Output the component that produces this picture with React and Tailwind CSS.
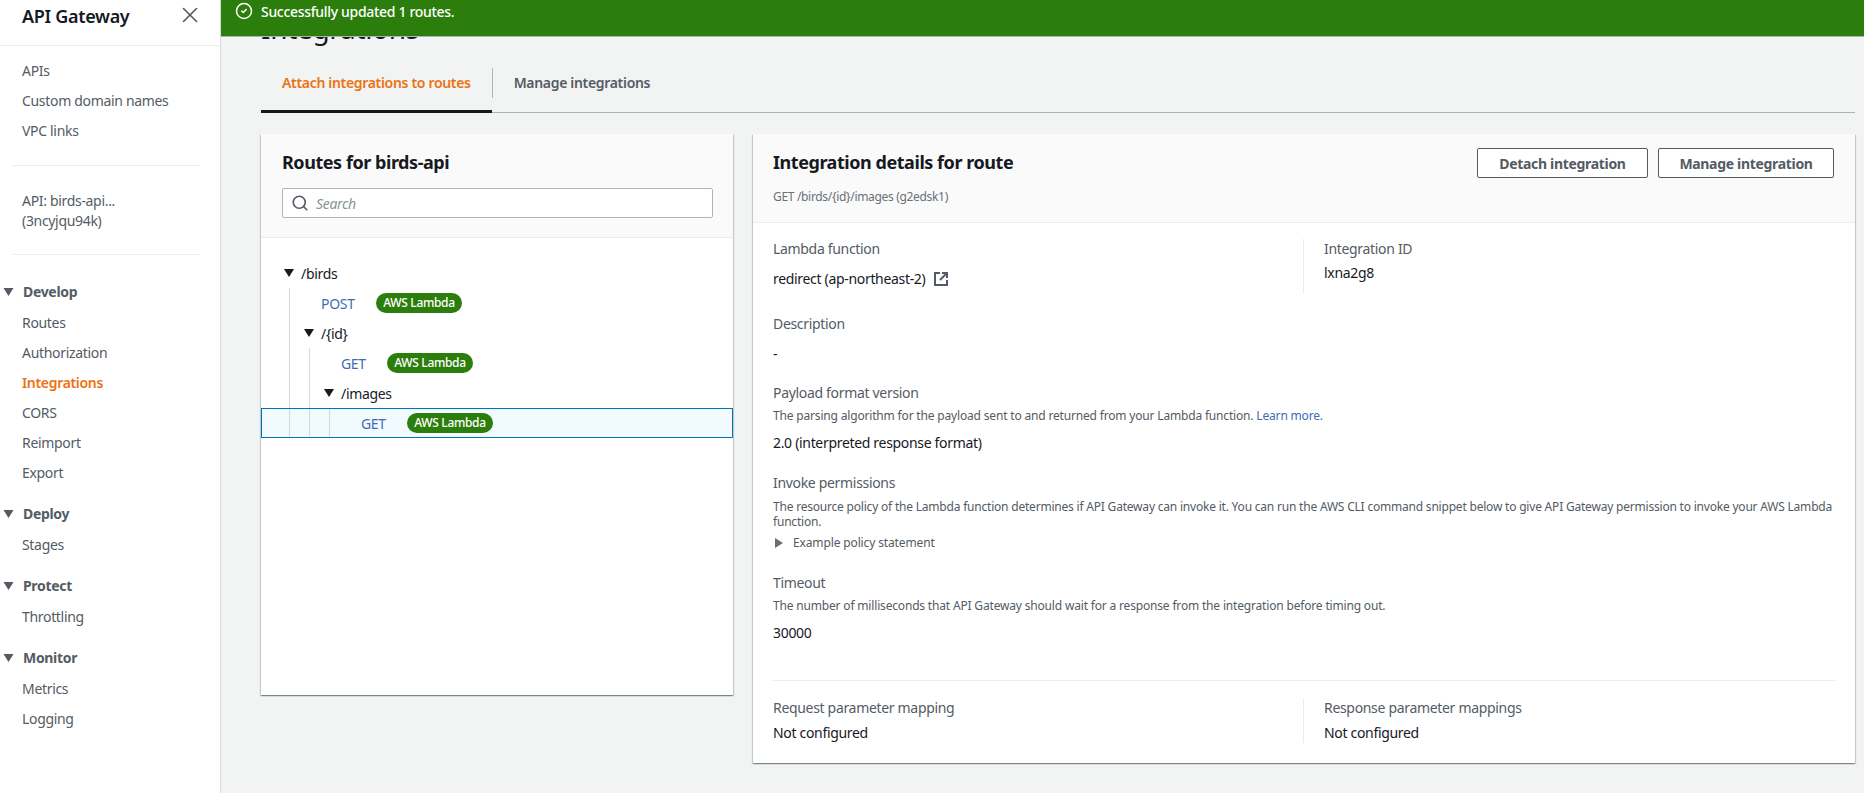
import React from 'react';
import { X, Search, CircleCheck } from 'lucide-react';

const Caret = ({ className }) => (
  <svg viewBox="0 0 10 8" className={className} fill="currentColor">
    <polygon points="0,0 10,0 5,8" />
  </svg>
);

const NewTabIcon = () => (
  <svg viewBox="0 0 16 16" className="h-[16px] w-[16px] text-[#545b64]" fill="none" stroke="currentColor" strokeWidth="2">
    <path d="M7 2H2v12h12V9" />
    <path d="M7 9l6-6" />
    <path d="M9 2h5v5" />
  </svg>
);

const NavLink = ({ children, active }) => (
  <a className={`block h-[30px] pl-[22px] text-[14px] leading-[30px] ${active ? 'font-semibold text-[#ec7211]' : 'text-[#545b64]'}`}>
    {children}
  </a>
);

const NavGroup = ({ title, items, active }) => (
  <div className="mb-[10px]">
    <div className="flex h-[32px] items-center pb-[1px] font-bold text-[#545b64]">
      <Caret className="ml-[3px] mr-[9px] h-[8px] w-[11px]" />
      <span className="text-[14px]">{title}</span>
    </div>
    {items.map((item) => (
      <NavLink key={item} active={item === active}>{item}</NavLink>
    ))}
  </div>
);

const Sidebar = () => (
  <aside className="w-[221px] shrink-0 border-r border-[#d5dbdb] bg-white">
    <div className="flex h-[46px] items-center justify-between border-b border-[#eaeded] pb-[12px] pl-[22px] pr-[17px]">
      <span className="text-[18px] font-semibold text-[#16191f]">API Gateway</span>
      <X size={26} strokeWidth={1.5} className="mb-[4px] text-[#545b64]" />
    </div>
    <div className="ml-[12px] mr-[20px] border-b border-[#eaeded] pb-[19px] pt-[10px]">
      <div className="-ml-[12px]">
        {['APIs', 'Custom domain names', 'VPC links'].map((item) => (
          <NavLink key={item}>{item}</NavLink>
        ))}
      </div>
    </div>
    <div className="ml-[12px] mr-[20px] border-b border-[#eaeded] pb-[23px] pl-[10px] pt-[25px] text-[14px] leading-[20px] text-[#545b64]">
      <div>API: birds-api...</div>
      <div>(3ncyjqu94k)</div>
    </div>
    <div className="pt-[21px]">
      <NavGroup title="Develop" active="Integrations" items={['Routes', 'Authorization', 'Integrations', 'CORS', 'Reimport', 'Export']} />
      <NavGroup title="Deploy" items={['Stages']} />
      <NavGroup title="Protect" items={['Throttling']} />
      <NavGroup title="Monitor" items={['Metrics', 'Logging']} />
    </div>
  </aside>
);

const Badge = () => (
  <span className="inline-flex h-[20px] w-[86px] items-center justify-center rounded-full bg-[#2b7d0c] text-[12px] font-medium text-white">
    AWS Lambda
  </span>
);

const Guides = ({ count }) => (
  <>
    <span className={`ml-[28px] h-full w-px bg-[#d5dbdb] ${count > 0 ? '' : 'hidden'}`} />
    <span className={`ml-[19px] h-full w-px bg-[#d5dbdb] ${count > 1 ? '' : 'hidden'}`} />
    <span className={`ml-[19px] h-full w-px bg-[#d5dbdb] ${count > 2 ? '' : 'hidden'}`} />
  </>
);

const MethodRow = ({ method, depth, width, selected }) => (
  <div className={`flex h-[30px] items-center ${selected ? 'bg-[#f1faff] outline outline-1 -outline-offset-1 outline-[#0073bb]' : ''}`}>
    <Guides count={depth} />
    <span className={`ml-[31px] text-[14px] text-[#3f6cb0] ${width}`}>{method}</span>
    <Badge />
  </div>
);

const PathRow = ({ path, depth }) => (
  <div className="flex h-[30px] items-center">
    <Guides count={depth} />
    <Caret className={`h-[8px] w-[10px] text-[#16191f] ${depth === 0 ? 'ml-[23px]' : 'ml-[14px]'}`} />
    <span className="ml-[7px] text-[14px] text-[#16191f]">{path}</span>
  </div>
);

const RoutesCard = () => (
  <section className="h-[561px] w-[472px] shrink-0 bg-white shadow-[0_1px_1px_0_rgba(0,28,36,0.3),1px_1px_1px_0_rgba(0,28,36,0.15),-1px_1px_1px_0_rgba(0,28,36,0.15)]">
    <div className="h-[104px] border-b border-[#eaeded] bg-[#fafafa] pl-[21px] pr-[20px] pt-[16px]">
      <h2 className="text-[18px] font-bold leading-[24px] tracking-[-0.025em] text-[#16191f]">Routes for birds-api</h2>
      <div className="mt-[14px] flex h-[30px] items-center rounded-[2px] border border-[#aab7b8] bg-white pl-[8px]">
        <Search size={18} strokeWidth={2.2} className="text-[#545b64]" />
        <span className="ml-[7px] text-[14px] italic text-[#879596]">Search</span>
      </div>
    </div>
    <div className="pt-[20px]">
      <PathRow path="/birds" depth={0} />
      <MethodRow method="POST" depth={1} width="w-[55px]" />
      <PathRow path="/{id}" depth={1} />
      <MethodRow method="GET" depth={2} width="w-[46px]" />
      <PathRow path="/images" depth={2} />
      <MethodRow method="GET" depth={3} width="w-[46px]" selected />
    </div>
  </section>
);

const Field = ({ label, hint, value, className = '' }) => (
  <div className={className}>
    <div className="text-[14px] leading-[20px] text-[#545b64]">{label}</div>
    {hint && <div className="mt-[5px] text-[12px] leading-[16px] tracking-[-0.0145em] text-[#545b64]">{hint}</div>}
    <div className={`text-[14px] leading-[20px] text-[#16191f] ${hint ? 'mt-[9px]' : 'mt-[5px]'}`}>{value}</div>
  </div>
);

const OutlineButton = ({ children, className }) => (
  <button className={`h-[30px] rounded-[2px] border border-[#545b64] bg-white text-center text-[14px] font-bold text-[#545b64] ${className}`}>
    {children}
  </button>
);

const DetailsCard = () => (
  <section className="h-[629px] min-w-0 flex-1 bg-white shadow-[0_1px_1px_0_rgba(0,28,36,0.3),1px_1px_1px_0_rgba(0,28,36,0.15),-1px_1px_1px_0_rgba(0,28,36,0.15)]">
    <div className="flex h-[89px] justify-between border-b border-[#eaeded] bg-[#fafafa] pl-[20px] pr-[21px] pt-[14px]">
      <div>
        <h2 className="mt-[2px] text-[18px] font-bold leading-[24px] tracking-[-0.025em] text-[#16191f]">Integration details for route</h2>
        <div className="mt-[15px] text-[12px] leading-[16px] text-[#687078]">GET /birds/&#123;id&#125;/images (g2edsk1)</div>
      </div>
      <div className="flex gap-[10px]">
        <OutlineButton className="w-[171px]">Detach integration</OutlineButton>
        <OutlineButton className="w-[176px]">Manage integration</OutlineButton>
      </div>
    </div>
    <div className="px-[20px] pt-[16px]">
      <div className="flex">
        <div className="h-[55px] w-[531px] border-r border-[#eaeded]">
          <Field
            label="Lambda function"
            value={
              <span className="mt-[10px] flex items-center gap-[8px]">
                redirect (ap-northeast-2)
                <NewTabIcon />
              </span>
            }
          />
        </div>
        <Field label="Integration ID" value="lxna2g8" className="pl-[20px] [&>div:last-child]:mt-[4px]" />
      </div>
      <Field label="Description" value="-" className="mt-[20px] [&>div:last-child]:mt-[10px]" />
      <Field
        label="Payload format version"
        className="mt-[19px]"
        hint={
          <>
            The parsing algorithm for the payload sent to and returned from your Lambda function.{' '}
            <a className="text-[#3f6cb0]">Learn more.</a>
          </>
        }
        value="2.0 (interpreted response format)"
      />
      <div className="mt-[20px]">
        <div className="text-[14px] leading-[20px] text-[#545b64]">Invoke permissions</div>
        <p className="mt-[6px] text-[12px] leading-[15px] tracking-[-0.017em] text-[#545b64]">
          The resource policy of the Lambda function determines if API Gateway can invoke it. You can run the AWS CLI command snippet below to give API Gateway permission to invoke your AWS Lambda function.
        </p>
        <div className="mt-[6px] flex h-[16px] items-center text-[12px] tracking-[-0.011em] text-[#545b64]">
          <svg viewBox="0 0 8 10" className="ml-[2px] h-[10px] w-[8px] text-[#687078]" fill="currentColor"><polygon points="0,0 8,5 0,10" /></svg>
          <span className="ml-[10px]">Example policy statement</span>
        </div>
      </div>
      <Field
        label="Timeout"
        className="mt-[22px]"
        hint="The number of milliseconds that API Gateway should wait for a response from the integration before timing out."
        value="30000"
      />
      <div className="mt-[37px] border-t border-[#eaeded] pt-[17px]">
        <div className="flex">
          <Field label="Request parameter mapping" value="Not configured" className="h-[45px] w-[531px] border-r border-[#eaeded]" />
          <Field label="Response parameter mappings" value="Not configured" className="pl-[20px]" />
        </div>
      </div>
    </div>
  </section>
);

export default function App() {
  return (
    <div className="flex h-[793px] w-[1864px] overflow-hidden bg-[#f2f3f3] font-['Noto_Sans',sans-serif] tracking-[-0.02em]">
      <Sidebar />
      <main className="relative min-w-0 flex-1">
        <div className="absolute inset-x-0 top-0 z-10 flex h-[37px] items-center border-b border-[#aab7b8] bg-[#2b7d0c] pb-[14px] pl-[14px] text-[14px] font-medium text-white">
          <CircleCheck size={18} strokeWidth={2} />
          <span className="ml-[8px]">Successfully updated 1 routes.</span>
        </div>
        <div className="pl-[40px] pr-[9px]">
          <h1 className="h-[48px] pt-[10px] text-[28px] leading-[36px] text-[#16191f]">Integrations</h1>
          <div className="flex h-[65px] items-stretch border-b border-[#aab7b8]">
            <div className="-mb-[1px] flex items-center border-b-[3px] border-[#16191f] px-[21px] pt-[6px] text-[14px] font-semibold text-[#ec7211]">
              Attach integrations to routes
            </div>
            <div className="flex items-center pt-[5px]">
              <div className="flex h-[30px] items-center border-l border-[#aab7b8] pl-[21px] text-[14px] font-semibold text-[#545b64]">Manage integrations</div>
            </div>
          </div>
          <div className="mt-[21px] flex items-start gap-[20px]">
            <RoutesCard />
            <DetailsCard />
          </div>
        </div>
      </main>
    </div>
  );
}
